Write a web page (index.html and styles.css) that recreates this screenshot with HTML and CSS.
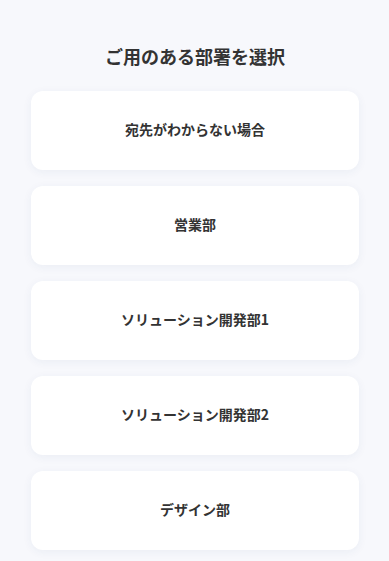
FILE: index.html
```html
<!DOCTYPE html>
<html lang="ja">
<head>
    <meta charset="UTF-8">
    <meta name="viewport" content="width=device-width, initial-scale=1.0">
    <title>部署を選択</title>
    <link rel="stylesheet" href="styles.css">
</head>
<body>
    <div class="container">
        <h1>ご用のある部署を選択</h1>
        <div class="dept-list">
            <button class="dept-card">宛先がわからない場合</button>
            <button class="dept-card">営業部</button>
            <button class="dept-card">ソリューション開発部1</button>
            <button class="dept-card">ソリューション開発部2</button>
            <button class="dept-card">デザイン部</button>
        </div>
    </div>
</body>
</html>
```

FILE: styles.css
```css
body {
    margin: 0;
    font-family: "Noto Sans CJK JP", "Noto Sans", sans-serif;
    background: #f7f8fc;
    color: #333;
    min-height: 100vh;
}
.container {
    padding: 43px 30px 11px 31px;
}
h1 {
    margin: 0 0 21px;
    font-size: 18px;
    line-height: 27px;
    font-weight: 700;
    text-align: center;
    color: #333;
}
.dept-list {
    display: flex;
    flex-direction: column;
    gap: 16px;
}
.dept-card {
    display: block;
    width: 100%;
    height: 79px;
    padding: 0 0 4px;
    background: #fff;
    border: none;
    border-radius: 12px;
    box-shadow: 0 2px 10px rgba(40, 60, 120, 0.06);
    font-family: inherit;
    font-size: 14px;
    font-weight: 700;
    color: #333;
    cursor: pointer;
}
```
